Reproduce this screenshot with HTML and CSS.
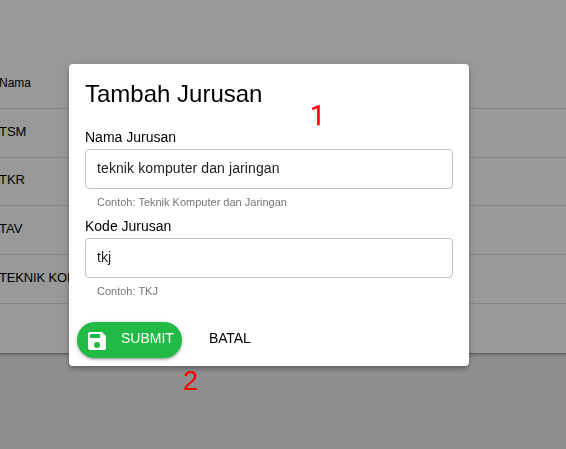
FILE: index.html
```html
<!DOCTYPE html>
<html lang="id">
<head>
<meta charset="utf-8">
<title>Tambah Jurusan</title>
<link rel="stylesheet" href="styles.css">
</head>
<body>
<main class="table-card">
  <div class="row head">Nama</div>
  <div class="row">TSM</div>
  <div class="row short">TKR</div>
  <div class="row">TAV</div>
  <div class="row long">TEKNIK KOMPUTER</div>
</main>
<div class="overlay">
  <form class="dialog">
    <h1 class="title">Tambah Jurusan</h1>
    <div class="fields">
      <label class="label" for="nama">Nama Jurusan</label>
      <input class="input" id="nama" value="teknik komputer dan jaringan">
      <p class="hint">Contoh: Teknik Komputer dan Jaringan</p>
      <label class="label" for="kode">Kode Jurusan</label>
      <input class="input" id="kode" value="tkj">
      <p class="hint">Contoh: TKJ</p>
    </div>
    <div class="actions">
      <button class="btn submit" type="button">
        <svg class="icon" viewBox="0 0 24 24"><path fill="currentColor" d="M17 3H5a2 2 0 0 0-2 2v14a2 2 0 0 0 2 2h14a2 2 0 0 0 2-2V7l-4-4zm-5 16a3 3 0 1 1 0-6 3 3 0 0 1 0 6zm3-10H5V5h10v4z"/></svg>
        <span>SUBMIT</span>
      </button>
      <button class="btn cancel" type="button">BATAL</button>
    </div>
  </form>
  <span class="marker one">1</span>
  <span class="marker two">2</span>
</div>
</body>
</html>
```
FILE: styles.css
```css
* { box-sizing: border-box; }
body {
  margin: 0;
  height: 449px;
  overflow: hidden;
  background: #edeff2;
  color: #000;
  font-family: "Liberation Sans", Arial, sans-serif;
  font-size: 14px;
}
.table-card {
  height: 353px;
  margin: 0 -16px;
  padding-top: 60px;
  background: #fff;
  box-shadow: 0 1px 5px rgba(0,0,0,.2), 0 2px 2px rgba(0,0,0,.14), 0 3px 1px -2px rgba(0,0,0,.12);
}
.row {
  height: 49px;
  display: flex;
  align-items: center;
  padding: 0 16px 3px 15px;
  border-bottom: 1px solid rgba(0,0,0,.12);
  font-size: 13px;
  white-space: nowrap;
}
.row.short { height: 48px; padding-bottom: 4px; }
.row.long { letter-spacing: -.15px; }
.row.head { font-size: 12px; padding-bottom: 2px; }
.overlay {
  position: fixed;
  inset: 0;
  padding: 64px 97px 83px 69px;
  background: rgba(0,0,0,.4);
}
.dialog {
  width: 400px;
  height: 302px;
  display: flex;
  flex-direction: column;
  background: #fff;
  border-radius: 4px;
  box-shadow: 0 2px 4px -1px rgba(0,0,0,.2), 0 4px 5px rgba(0,0,0,.14), 0 1px 10px rgba(0,0,0,.12);
}
.title {
  margin: 0;
  padding: 14px 16px 0;
  height: 64px;
  font-size: 24px;
  font-weight: 400;
  line-height: 32px;
}
.fields {
  padding: 0 16px;
  display: flex;
  flex-direction: column;
}
.label { height: 21px; line-height: 18px; }
.input {
  height: 40px;
  padding: 0 11px 2px;
  border: 1px solid #c2c2c2;
  border-radius: 4px;
  background: #fff;
  color: #212121;
  font: inherit;
  letter-spacing: .1px;
  outline: none;
}
.hint {
  margin: 0;
  height: 28px;
  padding: 7px 12px 0;
  color: #757575;
  font-size: 11px;
  line-height: 12px;
}
.actions {
  margin-top: 16px;
  padding: 0 8px;
  display: flex;
  gap: 11px;
}
.btn {
  height: 36px;
  border: 0;
  background: none;
  color: #000;
  font: inherit;
  display: flex;
  align-items: center;
}
.submit {
  width: 105px;
  padding: 0 8px;
  gap: 12px;
  border-radius: 18px;
  background: #21ba45;
  color: #fff;
  box-shadow: 0 1px 5px rgba(0,0,0,.2), 0 2px 2px rgba(0,0,0,.14), 0 3px 1px -2px rgba(0,0,0,.12);
}
.submit span, .cancel { padding-bottom: 5px; }
.icon { width: 24px; height: 24px; flex: none; margin-top: 2px; }
.cancel { padding-left: 16px; letter-spacing: -.15px; }
.marker {
  position: absolute;
  color: #f00;
  font-size: 27px;
  line-height: 30px;
}
.one { left: 310px; top: 101px; font-family: Roboto, sans-serif; -webkit-text-stroke: .3px #f00; }
.two { left: 183px; top: 366px; }
```
